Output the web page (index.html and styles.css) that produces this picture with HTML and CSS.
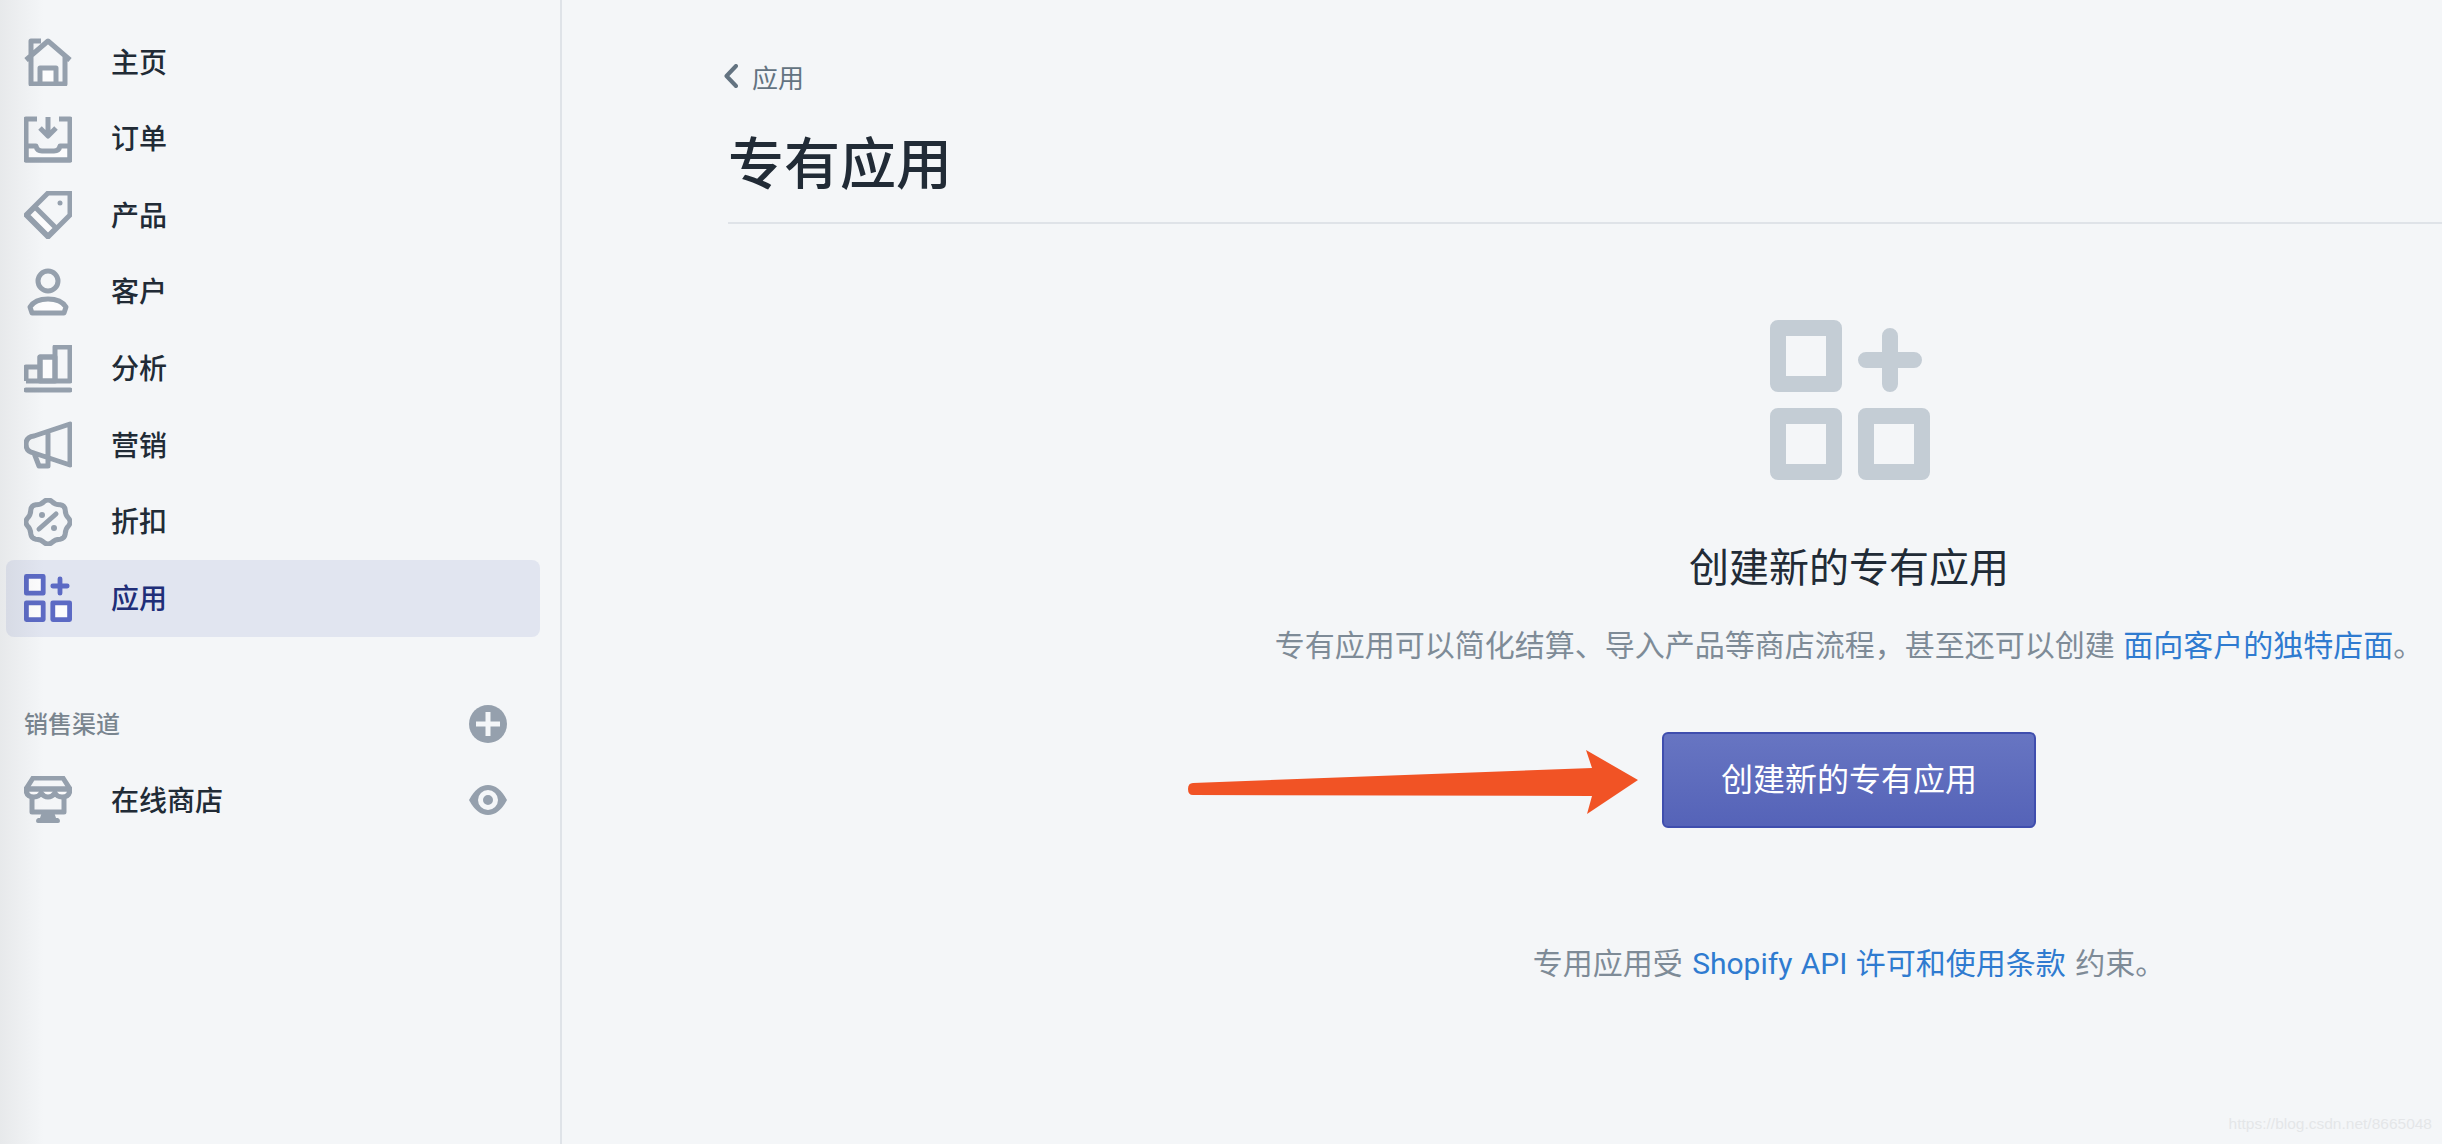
FILE: index.html
```html
<!DOCTYPE html>
<html>

	<head>
		<meta charset='utf-8' />
		<title>专有应用</title>
		<link rel="stylesheet" href="styles.css">
	</head>

	<body>
		<svg class="defs" width="0" height="0">
			<symbol id="apps" viewBox="0 0 160 160">
				<rect x="8" y="8" width="56" height="56" />
				<rect x="8" y="96" width="56" height="56" />
				<rect x="96" y="96" width="56" height="56" />
				<path d="M96 40H144M120 16V64" stroke-linecap="round" />
			</symbol>
		</svg>

		<div class="sidebar">
			<a class="item" href="#">
				<svg class="icon" viewBox="0 0 48 48">
					<path class="white" d="M16 46V30H32V46" />
					<path d="M2 22L24 3L46 22M7 18V46H41V18M7 18V3H17" />
				</svg>
				<span>主页</span>
			</a>
			<a class="item" href="#">
				<svg class="icon" viewBox="0 0 48 48">
					<path class="white" d="M2 31H12Q13 36 18 36H30Q35 36 36 31H46V45H2Z" />
					<path d="M13 4H2V45H46V4H35M24 2V20M16 13L24 21L32 13" />
				</svg>
				<span>订单</span>
			</a>
			<a class="item" href="#">
				<svg class="icon" viewBox="0 0 48 48">
					<path class="white" d="M3 24L11 16L32 37L24 45Z" />
					<path d="M24 2H46V24L24 46L2 24Z" />
					<circle class="dot" cx="36" cy="12" r="2.500" />
				</svg>
				<span>产品</span>
			</a>
			<a class="item" href="#">
				<svg class="icon" viewBox="0 0 48 48">
					<circle cx="24" cy="13" r="10" />
					<path class="white" d="M8 45L6 39Q11 31 24 31Q37 31 42 39L40 45Z" />
				</svg>
				<span>客户</span>
			</a>
			<a class="item" href="#">
				<svg class="icon" viewBox="0 0 48 48">
					<path class="white" d="M16 36V12H31V36Z" />
					<path d="M2 36V22H16M16 36V12H31M31 36V2H46V36ZM2 36H46" />
					<path d="M2 45H46" stroke-linecap="round" />
				</svg>
				<span>分析</span>
			</a>
			<a class="item" href="#">
				<svg class="icon" viewBox="0 0 48 48">
					<path d="M46 3V44L10 32Q2 31 2 23Q2 16 10 15ZM10 32L15 45H24V9" />
				</svg>
				<span>营销</span>
			</a>
			<a class="item" href="#">
				<svg class="icon" viewBox="-24 -24 48 48">
					<path d="M20.8 3.55Q17.1 7.1 17.2 12.2Q16.6 16.6 12.2 17.2Q7.1 17.1 3.55 20.8Q0 23.5 -3.55 20.8Q-7.1 17.1 -12.2 17.2Q-16.6 16.6 -17.2 12.2Q-17.1 7.1 -20.8 3.55Q-23.5 0 -20.8 -3.55Q-17.1 -7.1 -17.2 -12.2Q-16.6 -16.6 -12.2 -17.2Q-7.1 -17.1 -3.55 -20.8Q0 -23.5 3.55 -20.8Q7.1 -17.1 12.2 -17.2Q16.6 -16.6 17.2 -12.2Q17.1 -7.1 20.8 -3.55Q23.5 0 20.8 3.55Z" />
					<path d="M-9 7L8 -8" stroke-linecap="round" />
					<circle class="dot" cx="-6" cy="-7" r="3" />
					<circle class="dot" cx="6" cy="6" r="3" />
				</svg>
				<span>折扣</span>
			</a>
			<a class="item active" href="#">
				<svg class="icon apps-small">
					<use href="#apps" />
				</svg>
				<span>应用</span>
			</a>

			<div class="item section">
				<span>销售渠道</span>
				<svg class="mini" viewBox="0 0 38 38">
					<circle class="solid" cx="19" cy="19" r="19" />
					<path class="cross" d="M7 19H31M19 7V31" />
				</svg>
			</div>
			<a class="item" href="#">
				<svg class="icon" viewBox="0 0 48 48">
					<path class="white" d="M2 13H46Q46 21 38 21Q33 21 31 17Q28 21 24 21Q20 21 17 17Q15 21 10 21Q2 21 2 13Z" />
					<path d="M9 2H39L46 13H2ZM8 20V36H40V20" />
					<path class="solid" d="M18 36H30L32 42H34Q36 43 36 45Q36 47 34 47H14Q12 47 12 45Q12 43 14 42H16Z" />
				</svg>
				<span>在线商店</span>
				<svg class="mini eye" viewBox="0 0 38 30">
					<path class="solid" d="M0 15Q8 0 19 0Q30 0 38 15Q30 30 19 30Q8 30 0 15Z" />
					<circle class="ring" cx="19" cy="15" r="7.500" />
				</svg>
			</a>
		</div>

		<div class="main">
			<div class="head">
				<a class="back" href="#">
					<svg class="chevron" viewBox="0 0 14 24">
						<path d="M12 2L2.500 12L12 22" />
					</svg>
					<span>应用</span>
				</a>
				<h1>专有应用</h1>
			</div>

			<div class="empty">
				<svg class="empty-icon">
					<use href="#apps" />
				</svg>
				<h2>创建新的专有应用</h2>
				<p class="desc">专有应用可以简化结算、导入产品等商店流程，甚至还可以创建 <a href="#">面向客户的独特店面</a>。</p>
				<a class="btn" href="#">创建新的专有应用</a>
				<p class="terms">专用应用受 <a href="#">Shopify API 许可和使用条款</a> 约束。</p>
			</div>
		</div>

		<!-- 标注箭头 -->
		<svg class="arrow" viewBox="0 0 450 64">
			<path d="M5 33L404 18L398 0L450 30L399 64L404 46L5 45Q0 45 0 39Q0 33 5 33Z" />
		</svg>
		<div class="watermark">https://blog.csdn.net/8665048</div>
	</body>

</html>
```

FILE: styles.css
```css
body {
	margin: 0;
	width: 2442px;
	height: 1144px;
	overflow: hidden;
	display: flex;
	background: #f4f6f8;
	color: #212b36;
	font-family: Inter, "Noto Sans CJK SC", sans-serif;
}

a {
	text-decoration: none;
	color: inherit;
}

.defs {
	position: absolute;
}

/* 左侧导航 */
.sidebar {
	width: 560px;
	padding-top: 24px;
	border-right: 2px solid #dfe3e8;
	flex: none;
}

/* 截图左边缘的阴影 */
.sidebar::after {
	content: "";
	position: absolute;
	left: 0;
	top: 0;
	width: 44px;
	height: 1144px;
	background: linear-gradient(to right, rgba(60, 60, 60, 0.07), rgba(60, 60, 60, 0));
	pointer-events: none;
}

.item {
	display: flex;
	align-items: center;
	width: 534px;
	height: 76.57px;
	box-sizing: border-box;
	margin-left: 6px;
	padding: 0 33px 0 18px;
	font-size: 28px;
	font-weight: 500;
	border-radius: 8px;
}

.item span {
	padding-bottom: 3px;
}

.icon {
	width: 48px;
	height: 48px;
	margin-right: 39px;
	flex: none;
	fill: none;
	stroke: #95a0ad;
	stroke-width: 5;
	stroke-linejoin: round;
}

.icon .white {
	fill: #fcfcfd;
}

.icon .dot,
.icon .solid {
	fill: #95a0ad;
	stroke: none;
}

.active {
	background: #e1e5f0;
	color: #202e78;
}

.apps-small {
	stroke: #5c6ac4;
	stroke-width: 16;
	fill: #fcfcfd;
}

.section {
	margin-top: 49px;
	justify-content: space-between;
	font-size: 24px;
	color: #79858f;
}

.mini {
	width: 38px;
	height: 38px;
	flex: none;
}

.mini .solid {
	fill: #95a0ad;
}

.mini .cross {
	fill: none;
	stroke: #f4f6f8;
	stroke-width: 5;
}

.eye {
	height: 30px;
	margin-left: auto;
}

.mini .ring {
	fill: #95a0ad;
	stroke: #f4f6f8;
	stroke-width: 5;
}

/* 右侧内容 */
.main {
	flex: 1;
	padding-left: 166px;
}

.head {
	padding: 58px 0 26px;
	border-bottom: 2px solid #dfe3e8;
}

.back {
	display: flex;
	align-items: center;
	height: 36px;
	margin-left: -4px;
	font-size: 26px;
	color: #637381;
}

.chevron {
	width: 14px;
	height: 24px;
	margin-right: 14px;
	fill: none;
	stroke: #637381;
	stroke-width: 4;
	stroke-linejoin: round;
	stroke-linecap: round;
}

h1 {
	margin: 38px 0 0;
	font-size: 56px;
	line-height: 64px;
	font-weight: 500;
}

.empty {
	padding: 96px 0 0 528px;
	display: flex;
	flex-direction: column;
	align-items: center;
}

.empty-icon {
	width: 160px;
	height: 160px;
	margin-left: 2px;
	flex: none;
	fill: none;
	stroke: #c4cdd5;
	stroke-width: 16;
	stroke-linejoin: round;
}

h2 {
	margin: 60px 0 0;
	font-size: 40px;
	line-height: 56px;
	font-weight: 400;
}

.desc,
.terms {
	font-size: 30px;
	line-height: 44px;
	color: #7e8b97;
	white-space: nowrap;
}

.desc {
	margin: 27px 0 0;
}

.desc a,
.terms a {
	color: #2f7bd0;
}

.terms {
	margin: 113px 0 0;
	word-spacing: 1px;
}

.terms a {
	font-family: Roboto, "Noto Sans CJK SC", sans-serif;
}

.btn {
	display: flex;
	align-items: center;
	justify-content: center;
	width: 374px;
	height: 96px;
	box-sizing: border-box;
	margin-top: 65px;
	padding-bottom: 6px;
	font-size: 32px;
	color: #fff;
	background: linear-gradient(to bottom, #6775c2, #5563b8);
	border: 2px solid #3f4eae;
	border-radius: 6px;
}

/* 覆盖在页面上的标注 */
.arrow {
	position: absolute;
	left: 1188px;
	top: 750px;
	width: 450px;
	height: 64px;
	fill: #f15325;
}

.watermark {
	position: absolute;
	right: 10px;
	top: 1115px;
	font-family: "Liberation Sans", sans-serif;
	font-size: 15.500px;
	color: #e4e6e8;
}
```
